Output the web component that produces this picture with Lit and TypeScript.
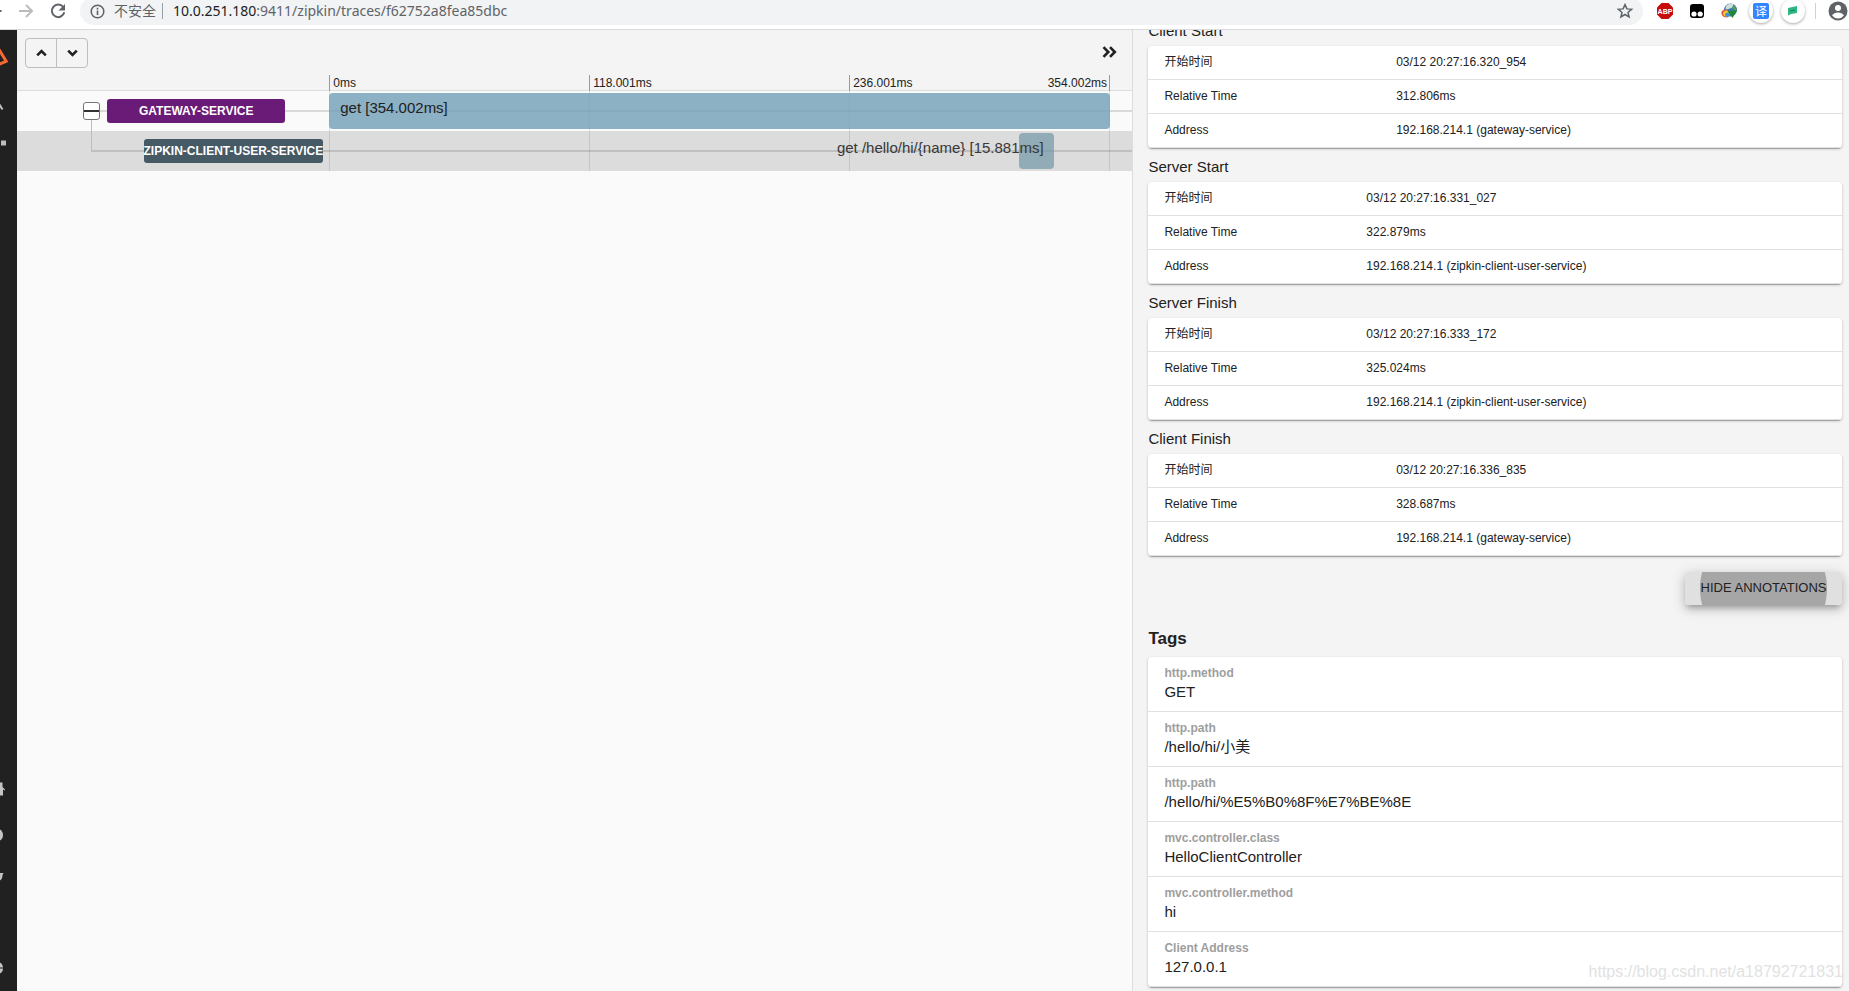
import { LitElement, html, css } from "lit";
import { customElement } from "lit/decorators.js";

const FONT = css`"Liberation Sans", Arial, "Noto Sans CJK SC", sans-serif`;

interface Annotation {
  title: string;
  start: string;
  relative: string;
  address: string;
  side: "client" | "server";
}

const ANNOTATIONS: Annotation[] = [
  { title: "Client Start", start: "03/12 20:27:16.320_954", relative: "312.806ms", address: "192.168.214.1 (gateway-service)", side: "client" },
  { title: "Server Start", start: "03/12 20:27:16.331_027", relative: "322.879ms", address: "192.168.214.1 (zipkin-client-user-service)", side: "server" },
  { title: "Server Finish", start: "03/12 20:27:16.333_172", relative: "325.024ms", address: "192.168.214.1 (zipkin-client-user-service)", side: "server" },
  { title: "Client Finish", start: "03/12 20:27:16.336_835", relative: "328.687ms", address: "192.168.214.1 (gateway-service)", side: "client" },
];

const TAGS: [string, string][] = [
  ["http.method", "GET"],
  ["http.path", "/hello/hi/小美"],
  ["http.path", "/hello/hi/%E5%B0%8F%E7%BE%8E"],
  ["mvc.controller.class", "HelloClientController"],
  ["mvc.controller.method", "hi"],
  ["Client Address", "127.0.0.1"],
];

@customElement("browser-bar")
class BrowserBar extends LitElement {
  static styles = css`
    :host {
      display: block;
      overflow: hidden;
      background: #fff;
      border-bottom: 1px solid #d9dadb;
      font-family: "Noto Sans", "Noto Sans CJK SC", sans-serif;
    }
    .bar { display: flex; align-items: center; height: 28px; margin: -3px 0 4px; }
    button { border: 0; padding: 0; background: none; display: flex; flex: none; }
    .nav { display: flex; align-items: center; gap: 16px; width: 80px; flex: none; }
    .omnibox {
      flex: 1;
      display: flex;
      align-items: center;
      height: 28px;
      padding: 0 8px 0 10px;
      border-radius: 14px;
      background: #f1f3f4;
      font-size: 14px;
      color: #5f6368;
    }
    .secure { margin-left: 9px; padding-right: 6px; border-right: 1px solid #9aa0a6; line-height: 16px; }
    .url { flex: 1; margin-left: 10px; line-height: 20px; font-family: "Noto Sans", sans-serif; font-size: 14px; color: #5f6368; text-decoration: none; }
    .host { color: #202124; }
    .ext { display: flex; align-items: center; flex: none; padding: 0 1px 0 6px; }
    .slot { width: 32px; display: flex; justify-content: center; }
    .round { width: 24px; height: 24px; border-radius: 12px; align-items: center; justify-content: center; box-shadow: 0 1px 3px rgba(0, 0, 0, 0.35); }
    .split { width: 1px; height: 16px; background: #cfd1d4; margin: 0 12px 0 6px; }
    svg { display: block; }
  `;

  render() {
    return html`
      <div class="bar">
        <div class="nav">
          <button aria-label="Back"><svg width="2" height="14" viewBox="0 0 2 14"><path d="M0 7h1.5" stroke="#5f6368" stroke-width="2" /></svg></button>
          <button aria-label="Forward"><svg width="16" height="16" viewBox="0 0 16 16"><path d="M1 8h13M8 2l6 6-6 6" fill="none" stroke="#babcbe" stroke-width="2" /></svg></button>
          <button aria-label="Reload"><svg width="16" height="16" viewBox="0 0 16 16"><path d="M13.2 4A6.3 6.3 0 1 0 14.3 9.3" fill="none" stroke="#5f6368" stroke-width="2" /><path d="M15 1v6.5H8.5z" fill="#5f6368" /></svg></button>
        </div>
        <div class="omnibox">
          <svg width="15" height="15" viewBox="0 0 15 15"><circle cx="7.5" cy="7.5" r="6.3" fill="none" stroke="#5f6368" stroke-width="1.5" /><path d="M7.5 6.5v4.5M7.5 3.8v1.6" stroke="#5f6368" stroke-width="1.6" /></svg>
          <span class="secure">不安全</span>
          <a class="url" href="#"><span class="host">10.0.251.180</span>:9411/zipkin/traces/f62752a8fea85dbc</a>
          <button aria-label="Bookmark"><svg width="20" height="16" viewBox="0 0 20 16"><path d="M10 1.6l1.9 4.3 4.7.4-3.6 3.1 1.1 4.6-4.100-2.500-4.100 2.500L7 9.400 3.400 6.300l4.700-.4z" fill="none" stroke="#5f6368" stroke-width="1.5" /></svg></button>
        </div>
        <div class="ext">
          <div class="slot"><svg width="18" height="18" viewBox="0 0 18 18"><path d="M5.500 1h7l4.500 4.500v7L12.500 17h-7L1 12.500v-7z" fill="#c70d0a" /><text x="9" y="12" text-anchor="middle" font-size="7" font-weight="700" font-family="Liberation Sans" fill="#fff">ABP</text></svg></div>
          <div class="slot"><svg width="16" height="16" viewBox="0 0 16 16"><rect x="1" y="1" width="14" height="14" rx="3" fill="#000" /><circle cx="5" cy="11" r="2.6" fill="#fff" /><circle cx="11.2" cy="11" r="2.6" fill="#fff" /></svg></div>
          <div class="slot"><svg width="17" height="16" viewBox="0 0 17 16"><circle cx="9.500" cy="7" r="6.500" fill="#3b78b5" /><path d="M5 3q3-3 7-2 1 3-3 4.500-3 1-4.500 1z" fill="#cfe0d8" /><path d="M12 2q4 2 3.500 6l-4-2z" fill="#5b9e4a" /><path d="M.5 11q-1-4 5-4.500l4 3-3 5q-5 0-6-3.500z" fill="#e0523a" /><path d="M2 11q0-3.500 4-3.500l3 2-3 4q-3.500 0-4-2.500z" fill="#f1c930" /><path d="M4 11q1-2 4-1.500L12 11l-5 3q-3-.5-3-3z" fill="#4a8fd0" /><path d="M6.500 8l9.500-.5L11.500 15 9.500 12z" fill="#1f8a2c" /></svg></div>
          <div class="slot"><button class="round" aria-label="Translate"><svg width="16" height="16" viewBox="0 0 16 16"><rect width="16" height="16" rx="2" fill="#3385ff" /><text x="8" y="12.500" text-anchor="middle" font-size="12" font-family="Noto Sans CJK SC" fill="#fff">译</text></svg></button></div>
          <div class="slot"><button class="round" aria-label="Notes"><svg width="10" height="10" viewBox="0 0 10 10"><path d="M0 2l9-2v7L3 8 0 9.500z" fill="#2fb682" /><path d="M2 5l5-1" stroke="#0f8a5b" stroke-width="1.200" /></svg></button></div>
          <span class="split"></span>
          <button aria-label="Profile"><svg width="20" height="20" viewBox="0 0 20 20"><circle cx="10" cy="10" r="9.500" fill="#5f6368" /><circle cx="10" cy="7" r="3" fill="#fff" /><path d="M4 14.500q2-3 6-3t6 3q-2.500 3-6 3t-6-3z" fill="#fff" /></svg></button>
        </div>
      </div>
    `;
  }
}

@customElement("side-rail")
class SideRail extends LitElement {
  static styles = css`
    :host { display: flex; flex-direction: column; justify-content: space-between; width: 17px; flex: none; background: #212121; overflow: hidden; }
    .group { display: flex; flex-direction: column; }
    a { display: flex; align-items: center; height: 46px; }
    .logo { height: 54px; }
    .search { height: 42px; }
    .deps { height: 34px; }
    .twitter { height: 38px; }
    .last { margin-top: 49px; }
    svg { display: block; }
  `;

  render() {
    return html`
      <nav class="group">
        <a class="logo" href="#" aria-label="Zipkin"><svg width="9" height="20" viewBox="0 0 9 20"><path d="M-1 2.500L6.200 14.300-1 17.300" fill="none" stroke="#f76a31" stroke-width="3" /></svg></a>
        <a class="search" href="#" aria-label="Search"><svg width="5" height="12" viewBox="0 0 5 12"><path d="M-.5 5.500l3 5" stroke="#bdbdbd" stroke-width="2" /></svg></a>
        <a class="deps" href="#" aria-label="Dependencies"><svg width="6" height="6" viewBox="0 0 6 6"><path d="M1 .5h5v5H1z" fill="#bdbdbd" /></svg></a>
      </nav>
      <nav class="group">
        <a href="#" aria-label="Home"><svg width="5" height="14" viewBox="0 0 5 14"><path d="M0 .5h2.500V5L5 7.500l-.5 1L3 7.500v6H0V8z" fill="#c4c4c4" /></svg></a>
        <a href="#" aria-label="Source"><svg width="4" height="14" viewBox="0 0 4 14"><path d="M0 1.500q3 2 3 5.500T0 12.500z" fill="#c4c4c4" /></svg></a>
        <a class="twitter" href="#" aria-label="Twitter"><svg width="4" height="10" viewBox="0 0 4 10"><path d="M0 1h3.500L2.500 3q0 4-2.500 5.500z" fill="#c4c4c4" /></svg></a>
        <a class="last" href="#" aria-label="Language"><svg width="4" height="12" viewBox="0 0 4 12"><path d="M0 .5q3 1.500 3 5.500T0 11.500z" fill="#c4c4c4" /><path d="M0 6h3" stroke="#212121" /></svg></a>
      </nav>
    `;
  }
}

@customElement("trace-timeline")
class TraceTimeline extends LitElement {
  static styles = css`
    :host { display: block; background: #fafafa; border-right: 1px solid #ddd; font-family: ${FONT}; color: #212121; }
    .head { background: #f4f4f4; border-bottom: 1px solid #ddd; }
    .tools { display: flex; justify-content: space-between; align-items: flex-start; height: 37px; padding: 8px 15px 0 8px; }
    button { padding: 0; background: none; border: 0; color: #212121; display: flex; align-items: center; justify-content: center; }
    .steps { display: flex; border: 1px solid #bdbdbd; border-radius: 4px; }
    .steps button { width: 30px; height: 28px; }
    .steps button + button { width: 31px; border-left: 1px solid #bdbdbd; }
    .more { height: 28px; }
    .scale { display: grid; grid-template-columns: 28% 70% 2%; height: 15px; }
    .ticks { grid-column: 2; display: grid; grid-template-columns: repeat(3, 1fr); border-right: 1px solid #999; font-size: 12px; line-height: 16px; }
    .tick { display: flex; justify-content: space-between; border-left: 1px solid #999; padding: 0 2px 0 3px; }
    .row { position: relative; height: 40px; }
    .row.selected { background: #dcdcdc; }
    .line, .grid, .service, .bar, .label, .toggle, .elbow { position: absolute; }
    .line { left: 83px; right: 0; top: 19px; height: 2px; background: rgba(0, 0, 0, 0.13); }
    .selected .line { left: 74px; }
    .grid { left: 28%; width: 70%; top: 0; bottom: 0; display: grid; grid-template-columns: repeat(3, 1fr); border-right: 1px solid rgba(0, 0, 0, 0.1); box-sizing: border-box; }
    .grid i { border-left: 1px solid rgba(0, 0, 0, 0.1); }
    .service {
      width: 16%; top: 8px; height: 24px; border-radius: 3px; overflow: hidden;
      display: flex; justify-content: center; align-items: center;
      font-size: 12px; font-weight: 700; line-height: 24px; color: #fff; white-space: nowrap;
    }
    .track { position: absolute; left: 28%; width: 70%; top: 0; bottom: 0; }
    .bar { top: 2px; height: 36px; border-radius: 4px; background: rgba(112, 158, 182, 0.8); }
    .selected .bar { background: rgba(112, 150, 166, 0.7); }
    .label { top: 8px; line-height: 18px; font-size: 15px; white-space: nowrap; }
    .selected .label { color: #383838; }
    .toggle { left: 66px; top: 11px; width: 17px; height: 18px; border: 1px solid #757575; border-radius: 3px; background: #fff; box-sizing: border-box; }
    .toggle i { width: 15px; height: 2px; background: #333; }
    .elbow { left: 74px; width: 1px; background: #bdbdbd; }
    .elbow.down { top: 29px; bottom: 0; }
    .elbow.into { top: 0; height: 20px; }
    svg { display: block; }
  `;

  render() {
    return html`
      <div class="head">
        <div class="tools">
          <div class="steps">
            <button aria-label="Previous span"><svg width="11" height="8" viewBox="0 0 11 8"><path d="M1.200 6.300l4.300-4.300 4.300 4.300" fill="none" stroke="#212121" stroke-width="2.600" /></svg></button>
            <button aria-label="Next span"><svg width="11" height="8" viewBox="0 0 11 8"><path d="M1.200 1.700l4.300 4.300 4.300-4.300" fill="none" stroke="#212121" stroke-width="2.600" /></svg></button>
          </div>
          <button class="more" aria-label="Hide details"><svg width="15" height="12" viewBox="0 0 15 12"><path d="M1.500 1.200l4.800 4.800-4.800 4.800M8 1.200l4.800 4.800L8 10.800" fill="none" stroke="#212121" stroke-width="2.600" /></svg></button>
        </div>
        <div class="scale">
          <div class="ticks">
            <div class="tick"><span>0ms</span></div>
            <div class="tick"><span>118.001ms</span></div>
            <div class="tick"><span>236.001ms</span><span>354.002ms</span></div>
          </div>
        </div>
      </div>
      <div class="row">
        <div class="line"></div>
        <div class="grid"><i></i><i></i><i></i></div>
        <div class="elbow down"></div>
        <button class="toggle" aria-label="Collapse"><i></i></button>
        <div class="service" style="left:8.07%;background:#6a1b78">GATEWAY-SERVICE</div>
        <div class="track">
          <div class="bar" style="left:0;width:100%"></div>
          <span class="label" style="left:1.4%">get [354.002ms]</span>
        </div>
      </div>
      <div class="row selected">
        <div class="line"></div>
        <div class="grid"><i></i><i></i><i></i></div>
        <div class="elbow into"></div>
        <div class="service" style="left:11.4%;background:#455a64">ZIPKIN-CLIENT-USER-SERVICE</div>
        <div class="track">
          <div class="bar" style="left:88.36%;width:4.49%"></div>
          <span class="label" style="right:8.5%">get /hello/hi/{name} [15.881ms]</span>
        </div>
      </div>
    `;
  }
}

@customElement("span-detail")
class SpanDetail extends LitElement {
  static styles = css`
    :host { display: block; overflow: hidden; background: #f4f4f4; font-family: ${FONT}; color: #212121; }
    .body { margin-top: -18px; padding: 0 7px 4px 15px; }
    h4 { margin: 0; height: 34px; line-height: 38px; font-size: 15px; font-weight: 400; }
    .card { background: #fff; border-radius: 4px; box-shadow: 0 1px 3px rgba(0, 0, 0, 0.2), 0 1px 1px rgba(0, 0, 0, 0.14), 0 2px 1px -1px rgba(0, 0, 0, 0.12); }
    table { width: 100%; border-collapse: collapse; table-layout: fixed; font-size: 12px; line-height: 16px; }
    th, td { padding: 0 16px 2px; height: 31px; border-bottom: 1px solid #e0e0e0; text-align: left; font-weight: 400; }
    .client th { width: 28.8%; }
    .server th { width: 24.5%; }
    .actions { display: flex; justify-content: flex-end; padding-top: 16px; }
    .hide {
      width: 157px; height: 33px; padding: 0 0 2px; border: 0; border-radius: 4px;
      font-family: inherit; font-size: 13px; color: #212121; white-space: nowrap;
      background: radial-gradient(circle 64px at center, #a6a6a6 63px, #e0e0e0 64px);
      box-shadow: 0 5px 5px -3px rgba(0, 0, 0, 0.2), 0 3px 14px 2px rgba(0, 0, 0, 0.12), 0 4px 8px rgba(0, 0, 0, 0.14);
    }
    h3 { margin: 0; height: 52px; line-height: 68px; font-size: 17px; font-weight: 700; }
    dl { margin: 0; }
    .tag { height: 46px; padding: 8px 16px 0; border-bottom: 1px solid #e0e0e0; }
    dt { font-size: 12px; line-height: 16px; font-weight: 700; color: #9e9e9e; }
    dd { margin: 0; font-size: 15px; line-height: 22px; }
  `;

  render() {
    return html`
      <div class="body">
        ${ANNOTATIONS.map(
          (a) => html`
            <h4>${a.title}</h4>
            <div class="card">
              <table class=${a.side}>
                <tr><th scope="row">开始时间</th><td>${a.start}</td></tr>
                <tr><th scope="row">Relative Time</th><td>${a.relative}</td></tr>
                <tr><th scope="row">Address</th><td>${a.address}</td></tr>
              </table>
            </div>
          `
        )}
        <div class="actions"><button class="hide">HIDE ANNOTATIONS</button></div>
        <h3>Tags</h3>
        <dl class="card">
          ${TAGS.map(([k, v]) => html`<div class="tag"><dt>${k}</dt><dd>${v}</dd></div>`)}
        </dl>
      </div>
    `;
  }
}

@customElement("app-root")
class AppRoot extends LitElement {
  static styles = css`
    :host { display: flex; flex-direction: column; height: 100vh; overflow: hidden; position: relative; }
    .content { flex: 1; min-height: 0; display: flex; }
    trace-timeline { flex: 1116; min-width: 0; }
    span-detail { flex: 716; min-width: 0; }
    .watermark { position: absolute; right: 6px; bottom: 8px; font: 16px/22px ${FONT}; color: #e2e2e2; }
  `;

  render() {
    return html`
      <browser-bar></browser-bar>
      <div class="content">
        <side-rail></side-rail>
        <trace-timeline></trace-timeline>
        <span-detail></span-detail>
      </div>
      <div class="watermark">https://blog.csdn.net/a18792721831</div>
    `;
  }
}
